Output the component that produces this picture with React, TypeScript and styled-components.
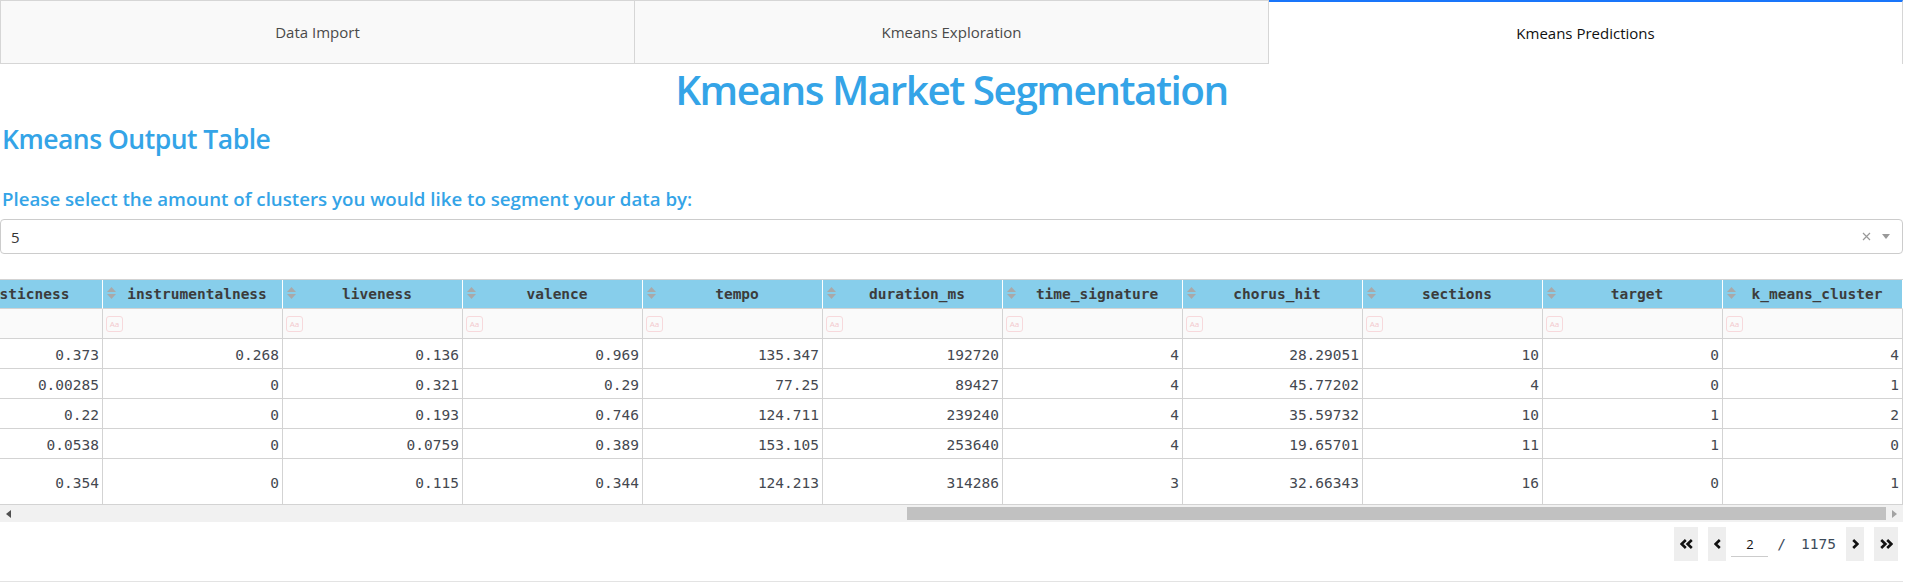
import React from "react";
import styled, { createGlobalStyle } from "styled-components";

const GlobalStyle = createGlobalStyle`
  html, body { margin: 0; padding: 0; background: #ffffff; }
  body { font-family: "Open Sans", "Noto Sans", sans-serif; color: #333; overflow: hidden; }
  * { box-sizing: border-box; }
`;

const BLUE = "#34a4e7";
const MONO = `"DejaVu Sans Mono", "Liberation Mono", monospace`;

const Page = styled.div`
  width: 1903px;
`;

const TabBar = styled.div`
  display: flex;
  height: 64px;
`;

const Tab = styled.div<{ $active?: boolean }>`
  flex: 1;
  display: flex;
  align-items: center;
  justify-content: center;
  font-size: 15px;
  color: ${(p) => (p.$active ? "#111" : "#4a4a4a")};
  background: ${(p) => (p.$active ? "#ffffff" : "#f9f9f9")};
  border: 1px solid #d6d6d6;
  border-top: ${(p) => (p.$active ? "2px solid #1975fa" : "1px solid #d6d6d6")};
  border-bottom: ${(p) => (p.$active ? "none" : "1px solid #d6d6d6")};
  & + & {
    border-left: none;
  }
`;

const Content = styled.div`
  border-bottom: 1px solid #e3e3e3;
  padding-bottom: 20px;
`;

const Title = styled.h1`
  margin: 1px 0 0;
  text-align: center;
  font-size: 40.5px;
  line-height: 49px;
  font-weight: 600;
  letter-spacing: -1.5px;
  color: ${BLUE};
`;

const SectionTitle = styled.h3`
  margin: 9px 0 0 2px;
  font-size: 26.5px;
  line-height: 32px;
  font-weight: 600;
  letter-spacing: -0.5px;
  color: ${BLUE};
`;

const Label = styled.div`
  margin: 32px 0 0 2px;
  font-size: 18.7px;
  line-height: 24px;
  font-weight: 600;
  color: ${BLUE};
`;

const Select = styled.div`
  margin-top: 8px;
  height: 35px;
  border: 1px solid #cccccc;
  border-radius: 4px;
  display: flex;
  align-items: center;
  padding: 0 12px 0 10px;
`;

const SelectValue = styled.span`
  flex: 1;
  font-size: 15px;
  color: #333;
`;

const SelectControls = styled.div`
  display: flex;
  align-items: center;
  gap: 11px;
`;

const Arrow = styled.span`
  width: 0;
  height: 0;
  border-style: solid;
  border-width: 5px 4.5px 0;
  border-color: #999 transparent transparent;
`;

const TableViewport = styled.div`
  margin-top: 25px;
  display: flex;
  justify-content: flex-end;
  overflow: hidden;
`;

const Grid = styled.div`
  flex: none;
  border-top: 1px solid #d3d3d3;
  font-family: ${MONO};
`;

const Row = styled.div<{ $h: number }>`
  display: flex;
  height: ${(p) => p.$h}px;
`;

const HeadCell = styled.div`
  width: 180px;
  display: flex;
  align-items: center;
  padding: 0 4px;
  background: #87ceeb;
  border-right: 1px solid #ffffff;
  border-bottom: 1px solid #d3d3d3;
  font-size: 14.5px;
  font-weight: bold;
  color: #3c3c3c;
`;

const SortIcon = styled.svg`
  flex: none;
  margin-top: -2px;
`;

const HeadText = styled.span`
  flex: 1;
  text-align: center;
  white-space: nowrap;
`;

const FilterCell = styled.div`
  width: 180px;
  display: flex;
  align-items: center;
  padding: 0 3px;
  background: #fafafa;
  border-right: 1px solid #d3d3d3;
  border-bottom: 1px solid #d3d3d3;
`;

const CaseToggle = styled.span`
  width: 17px;
  height: 16px;
  border: 1px solid #f7d9dc;
  border-radius: 3px;
  font-family: "Open Sans", sans-serif;
  font-size: 8px;
  line-height: 14px;
  text-align: center;
  color: #f3c9cd;
  margin-top: 1px;
`;

const DataCell = styled.div`
  width: 180px;
  display: flex;
  align-items: center;
  justify-content: flex-end;
  padding: 2px 3px 0;
  background: #ffffff;
  border-right: 1px solid #d3d3d3;
  border-bottom: 1px solid #d3d3d3;
  font-size: 14.5px;
  color: rgb(68, 72, 80);
`;

const ScrollBar = styled.div`
  display: flex;
  height: 17px;
  background: #f1f1f1;
`;

const ScrollButton = styled.div`
  width: 17px;
  display: flex;
  align-items: center;
  justify-content: center;
`;

const ScrollSpacer = styled.div`
  flex: 1;
`;

const ScrollThumb = styled.div`
  width: 979px;
  margin: 2px 0;
  background: #c1c1c1;
`;

const Pager = styled.div`
  margin-top: 5px;
  display: flex;
  justify-content: flex-end;
  align-items: center;
  padding-right: 5px;
  font-family: ${MONO};
`;

const PageButton = styled.button<{ $wide?: boolean; $gap?: number }>`
  width: ${(p) => (p.$wide ? 24 : 18)}px;
  height: 34px;
  margin-left: ${(p) => p.$gap ?? 0}px;
  padding: 0;
  border: none;
  background: #eeeeee;
  display: flex;
  align-items: center;
  justify-content: center;
`;

const PageInput = styled.div`
  width: 37px;
  height: 30px;
  margin: 0 0 0 5px;
  align-self: flex-start;
  border-bottom: 1px solid #cccccc;
  display: flex;
  align-items: center;
  justify-content: center;
  padding-top: 5px;
  font-family: "Open Sans", sans-serif;
  font-size: 13px;
  color: #111;
`;

const Slash = styled.span`
  margin-left: 9px;
  font-size: 14.5px;
  color: #3c4b5a;
`;

const PageCount = styled.span`
  margin-left: 15px;
  font-size: 14.5px;
  color: #3c4b5a;
`;

const columns = [
  "acousticness",
  "instrumentalness",
  "liveness",
  "valence",
  "tempo",
  "duration_ms",
  "time_signature",
  "chorus_hit",
  "sections",
  "target",
  "k_means_cluster",
];

const rows: (string | number)[][] = [
  ["0.373", "0.268", "0.136", "0.969", "135.347", 192720, 4, "28.29051", 10, 0, 4],
  ["0.00285", 0, "0.321", "0.29", "77.25", 89427, 4, "45.77202", 4, 0, 1],
  ["0.22", 0, "0.193", "0.746", "124.711", 239240, 4, "35.59732", 10, 1, 2],
  ["0.0538", 0, "0.0759", "0.389", "153.105", 253640, 4, "19.65701", 11, 1, 0],
  ["0.354", 0, "0.115", "0.344", "124.213", 314286, 3, "32.66343", 16, 0, 1],
];

const rowHeights = [30, 30, 30, 30, 46];

const Sort = () => (
  <SortIcon width="9" height="12" viewBox="0 0 9 12">
    <polygon points="4.5,0 9,5 0,5" fill="#a9a9a9" />
    <polygon points="0,7 9,7 4.5,12" fill="#a9a9a9" />
  </SortIcon>
);

const Chevron = ({ double, dir }: { double?: boolean; dir: "left" | "right" }) => {
  const flip = dir === "right" ? "scale(-1,1)" : undefined;
  const w = double ? 13 : 7;
  return (
    <svg width={w} height="10" viewBox={`0 0 ${w} 10`}>
      <g transform={flip} style={{ transformOrigin: "center" }}>
        <polyline points="5.8,1 1.6,5 5.8,9" fill="none" stroke="#111" strokeWidth="2.6" />
        {double && <polyline points="11.8,1 7.6,5 11.8,9" fill="none" stroke="#111" strokeWidth="2.6" />}
      </g>
    </svg>
  );
};

const ScrollArrow = ({ dir, color }: { dir: "left" | "right"; color: string }) => (
  <svg width="5" height="8" viewBox="0 0 5 8">
    {dir === "left" ? (
      <polygon points="5,0 0,4 5,8" fill={color} />
    ) : (
      <polygon points="0,0 5,4 0,8" fill={color} />
    )}
  </svg>
);

export default function App() {
  return (
    <Page>
      <GlobalStyle />
      <TabBar>
        <Tab>Data Import</Tab>
        <Tab>Kmeans Exploration</Tab>
        <Tab $active>Kmeans Predictions</Tab>
      </TabBar>
      <Content>
        <Title>Kmeans Market Segmentation</Title>
        <SectionTitle>Kmeans Output Table</SectionTitle>
        <Label>Please select the amount of clusters you would like to segment your data by:</Label>
        <Select>
          <SelectValue>5</SelectValue>
          <SelectControls>
            <svg width="9" height="9" viewBox="0 0 9 9">
              <path d="M1 1 L8 8 M8 1 L1 8" stroke="#999" strokeWidth="1.2" />
            </svg>
            <Arrow />
          </SelectControls>
        </Select>
        <TableViewport>
          <Grid>
            <Row $h={29}>
              {columns.map((c) => (
                <HeadCell key={c}>
                  <Sort />
                  <HeadText>{c}</HeadText>
                </HeadCell>
              ))}
            </Row>
            <Row $h={30}>
              {columns.map((c) => (
                <FilterCell key={c}>
                  <CaseToggle>Aa</CaseToggle>
                </FilterCell>
              ))}
            </Row>
            {rows.map((r, i) => (
              <Row $h={rowHeights[i]} key={i}>
                {r.map((v, j) => (
                  <DataCell key={j}>{v}</DataCell>
                ))}
              </Row>
            ))}
          </Grid>
        </TableViewport>
        <ScrollBar>
          <ScrollButton>
            <ScrollArrow dir="left" color="#505050" />
          </ScrollButton>
          <ScrollSpacer />
          <ScrollThumb />
          <ScrollButton>
            <ScrollArrow dir="right" color="#a3a3a3" />
          </ScrollButton>
        </ScrollBar>
        <Pager>
          <PageButton $wide>
            <Chevron double dir="left" />
          </PageButton>
          <PageButton $gap={10}>
            <Chevron dir="left" />
          </PageButton>
          <PageInput>2</PageInput>
          <Slash>/</Slash>
          <PageCount>1175</PageCount>
          <PageButton $gap={10}>
            <Chevron dir="right" />
          </PageButton>
          <PageButton $wide $gap={10}>
            <Chevron double dir="right" />
          </PageButton>
        </Pager>
      </Content>
    </Page>
  );
}
